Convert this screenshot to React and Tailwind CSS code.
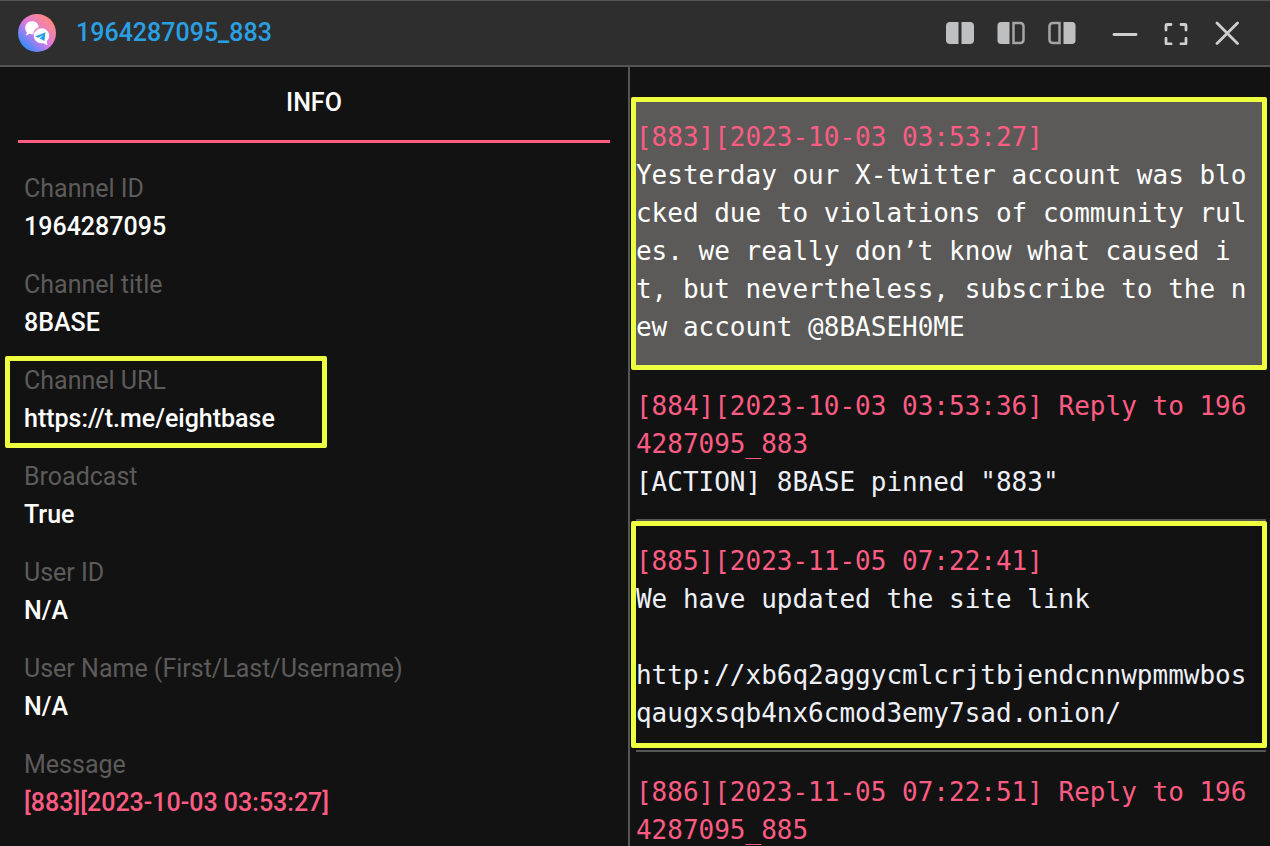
import React, { useState } from 'react';

const fields = [
    { label: 'Channel ID', value: '1964287095' },
    { label: 'Channel title', value: '8BASE' },
    { label: 'Channel URL', value: 'https://t.me/eightbase', href: 'https://t.me/eightbase', marked: true },
    { label: 'Broadcast', value: 'True' },
    { label: 'User ID', value: 'N/A' },
    { label: 'User Name (First/Last/Username)', value: 'N/A' },
    { label: 'Message', value: '[883][2023-10-03 03:53:27]', accent: true },
];

const onionUrl = 'http://xb6q2aggycmlcrjtbjendcnnwpmmwbosqaugxsqb4nx6cmod3emy7sad.onion/';

const messages = [
    {
        id: 883,
        date: '2023-10-03 03:53:27',
        text: 'Yesterday our X-twitter account was blocked due to violations of community rules. we really don’t know what caused it, but nevertheless, subscribe to the new account @8BASEH0ME',
        selected: true,
        mark: 'top-0 -bottom-1.5',
    },
    { id: 884, date: '2023-10-03 03:53:36', replyTo: '1964287095_883', text: '[ACTION] 8BASE pinned "883"' },
    {
        id: 885,
        date: '2023-11-05 07:22:41',
        text: 'We have updated the site link\n\n',
        link: onionUrl,
        mark: 'top-0 bottom-0.5',
    },
    { id: 886, date: '2023-11-05 07:22:51', replyTo: '1964287095_885', text: '' },
];

const Logo = () => (
    <svg width="38" height="38" viewBox="0 0 38 38" aria-hidden="true">
        <defs>
            <linearGradient id="logo" x1="5" y1="33" x2="31" y2="5" gradientUnits="userSpaceOnUse">
                <stop offset="0" stopColor="#2f8dff" />
                <stop offset="0.5" stopColor="#dc78e4" />
                <stop offset="1" stopColor="#ff8a82" />
            </linearGradient>
        </defs>
        <circle cx="19" cy="19" r="19" fill="url(#logo)" />
        {/* Back bubble */}
        <path d="M14 7.2c3.8 0 6.6 2.6 6.7 6-3 .9-5.2 3.6-5.4 7l-1.3.1c-1 0-1.900-.2-2.700-.5-.9.8-2 1.500-3.500 1.700.8-1.200 1.100-2.300 1-3.400C7.800 17 7.200 15.500 7.200 13.800c0-3.700 3-6.600 6.800-6.600z" fill="#fff" />
        {/* Front bubble */}
        <path d="M23.500 14.200c4.300 0 7.700 3.300 7.700 7.500 0 2.200-.9 4.100-2.400 5.400-.1 1.300.1 2.500.9 3.700-1.900-.2-3.200-.9-4.200-1.900-.6.200-1.300.3-2 .3-4.300 0-7.700-3.300-7.700-7.500s3.400-7.500 7.700-7.500z" fill="#fff" />
        <path d="M27.500 18.300l-10.500 4.200 3.600 1.200 4.600-2.800-3.600 3.600 4.900 2.500z" fill="#2aa1e2" />
    </svg>
);

const paneStroke = { fill: 'none', stroke: '#a5a5a6', strokeWidth: 2.5 };

const icons = {
    both: (
        <>
            <path d="M5 1h8.500v22H5c-2.500 0-4-1.500-4-4V5c0-2.500 1.500-4 4-4z" fill="#bebfc1" />
            <path d="M16.500 1H25c2.500 0 4 1.500 4 4v14c0 2.500-1.500 4-4 4h-8.500z" fill="#bebfc1" />
        </>
    ),
    left: (
        <>
            <path d="M5 1h8.500v22H5c-2.200 0-3.500-1.300-3.500-3.500v-15C1.500 2.300 2.800 1 5 1z" fill="#bebfc1" />
            <path d="M17.500 2H24c2.500 0 3.500 1 3.500 3.500v13c0 2.500-1 3.500-3.500 3.500h-6.500z" {...paneStroke} />
        </>
    ),
    right: (
        <>
            <path d="M12.500 2H6C3.500 2 2.500 3 2.500 5.500v13C2.500 21 3.500 22 6 22h6.500z" {...paneStroke} />
            <path d="M16.500 1H25c2.200 0 3.500 1.300 3.500 3.500v15c0 2.200-1.300 3.500-3.500 3.500h-8.500z" fill="#bebfc1" />
        </>
    ),
    minimize: <path d="M4 13.500h22" />,
    maximize: (
        <path d="M5 9V4.500q0-1 1-1h4M20 3.500h4q1 0 1 1V9M25 17.500v4.500q0 1-1 1h-4M10 23H6q-1 0-1-1v-4.500" />
    ),
    close: <path d="M5 2l20.500 20.500M25.500 2L5 22.500" />,
};

const IconButton = ({ name, label, onClick }) => (
    <button type="button" aria-label={label} onClick={onClick} className="flex w-[51px] justify-center">
        <svg
            width="30"
            height="24"
            viewBox="0 0 30 24"
            fill="none"
            stroke={name === 'both' || name === 'left' || name === 'right' ? 'none' : '#cfcfcf'}
            strokeWidth="2.800"
            strokeLinecap="round"
        >
            {icons[name]}
        </svg>
    </button>
);

const Field = ({ field }) => (
    <div className="relative">
        <dt className="font-normal text-[#5c5b5a]">{field.label}</dt>
        <dd className={field.accent ? 'text-[#ff5c84]' : 'text-white'}>
            {field.href ? <a href={field.href}>{field.value}</a> : field.value}
        </dd>
        {field.marked && (
            <div className="pointer-events-none absolute -top-1.5 -bottom-2.5 -left-[19px] w-[322px] rounded-xs border-5 border-[#edff3f]" />
        )}
    </div>
);

const Message = ({ message }) => {
    const reply = message.replyTo ? ` Reply to ${message.replyTo}` : '';

    return (
        <li className={`relative border-b-2 border-[#555555] pt-[21px] pr-3 pb-[18px] ${message.selected ? 'bg-[#5b5a58]' : ''}`}>
            <p className="text-[#ff5c84]">{`[${message.id}][${message.date}]${reply}`}</p>
            <p className={`whitespace-pre-wrap ${message.selected ? 'text-white' : 'text-[#eef0f8]'}`}>
                {message.text}
                {message.link && <a href={message.link}>{message.link}</a>}
            </p>
            {message.mark && (
                <div className={`pointer-events-none absolute -right-px -left-[5px] rounded-xs border-5 border-[#edff3f] ${message.mark}`} />
            )}
        </li>
    );
};

const App = () => {
    const [view, setView] = useState('both');

    return (
        <div className="flex h-screen flex-col overflow-hidden bg-[#121212] font-['Roboto',sans-serif] text-[25px] leading-[38px] font-medium">
            {/* Title bar */}
            <header className="flex h-[67px] shrink-0 items-center border-t border-b-2 border-[#555555] bg-[#2e2e2e] pr-[18px] pl-[18px]">
                <Logo />
                <h1 className="ml-5 flex-1 text-[#29a0e3]">1964287095_883</h1>
                <div className="flex">
                    <IconButton name="both" label="Show both panes" onClick={() => setView('both')} />
                    <IconButton name="left" label="Show left pane" onClick={() => setView('left')} />
                    <IconButton name="right" label="Show right pane" onClick={() => setView('right')} />
                </div>
                <div className="ml-3 flex">
                    <IconButton name="minimize" label="Minimize" />
                    <IconButton name="maximize" label="Maximize" />
                    <IconButton name="close" label="Close" />
                </div>
            </header>

            <main className="flex min-h-0 flex-1">
                {/* Info */}
                {view !== 'right' && (
                    <section className="w-[49.6%] grow overflow-hidden border-r-2 border-[#555555]">
                        <h2 className="mx-[18px] border-b-3 border-[#ff5c84] pt-[17px] pb-[18px] text-center text-white">INFO</h2>
                        <dl className="flex flex-col gap-5 px-6 pt-[27px]">
                            {fields.map((field) => (
                                <Field key={field.label} field={field} />
                            ))}
                        </dl>
                    </section>
                )}

                {/* Messages */}
                {view !== 'left' && (
                    <section className="w-[50.4%] grow overflow-hidden pt-[30px] pr-1 pl-1.5">
                        <ol className="font-['DejaVu_Sans_Mono',monospace] text-[26px] leading-[38px] font-normal break-all">
                            {messages.map((message) => (
                                <Message key={message.id} message={message} />
                            ))}
                        </ol>
                    </section>
                )}
            </main>
        </div>
    );
};

export default App;
